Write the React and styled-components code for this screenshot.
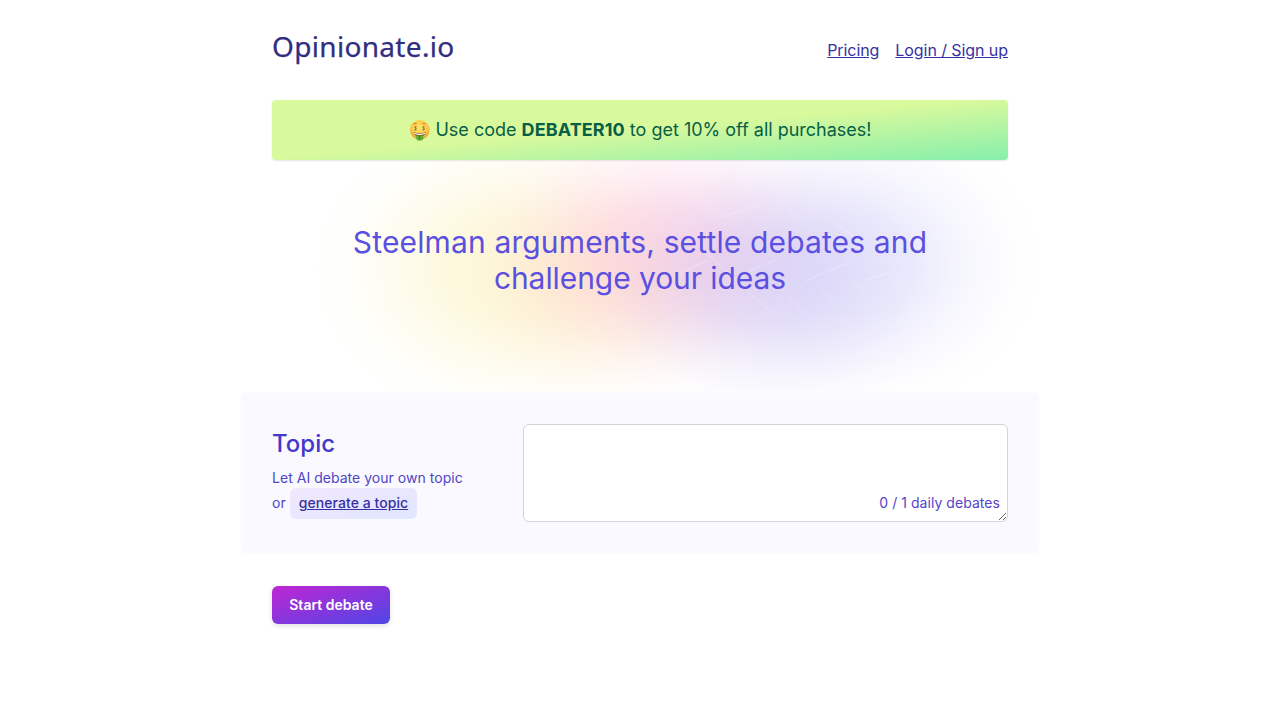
import * as React from 'react';
import styled, { createGlobalStyle } from 'styled-components';

const GlobalStyle = createGlobalStyle`
  * {
    box-sizing: border-box;
  }

  body {
    margin: 0;
    background: #fff;
    font-family: Inter, "Liberation Sans", sans-serif;
    font-size: 16px;
    line-height: 24px;
    color: #3730a3;
  }
`

const Page = styled.div`
  width: 736px;
  margin: 0 auto;
  height: 720px;
`

const Header = styled.header`
  display: flex;
  justify-content: space-between;
  height: 100px;
`

const Logo = styled.a`
  margin-top: 26px;
  font-family: "Noto Sans", sans-serif;
  font-size: 28px;
  line-height: 40px;
  letter-spacing: 0.32px;
  color: #312e81;
  -webkit-text-stroke: 0.25px #312e81;
`

const Nav = styled.nav`
  display: flex;
  gap: 16px;
  margin-top: 38px;
`

const NavLink = styled.a`
  color: #3730a3;
  letter-spacing: -0.07px;
  text-decoration: underline;
`

const Banner = styled.div`
  position: relative;
  z-index: 1;
  display: flex;
  justify-content: center;
  align-items: center;
  gap: 5px;
  height: 60px;
  padding-left: 1px;
  border-radius: 4px;
  background: linear-gradient(to bottom right, #d9f99d 0%, #d9f99d 48%, #86efac 100%);
  box-shadow: 0 1px 2px rgba(0, 0, 0, 0.1);
  color: #065f46;
  font-size: 18px;
  line-height: 28px;
  white-space: pre;

  strong {
    font-weight: 700;
    letter-spacing: 0.1px;
  }
`

const Hero = styled.section`
  position: relative;
  height: 232px;
  padding-top: 64px;
`

const Glow = styled.svg`
  position: absolute;
  left: -32px;
  top: -10px;
  width: 830px;
  height: 290px;
`

const Headline = styled.h1`
  position: relative;
  margin: 0 auto;
  color: #5b50df;
  font-size: 30px;
  font-weight: 400;
  line-height: 36px;
  text-align: center;
`

const Line = styled.span`
  display: block;
  letter-spacing: ${(props) => props.$spacing}px;
`

const Panel = styled.section`
  position: relative;
  display: grid;
  grid-template-columns: 235px 485px;
  gap: 16px;
  margin: 0 -32px;
  padding: 32px;
  height: 162px;
  border-radius: 6px;
  background: rgba(248, 248, 255, 0.88);
  box-shadow: inset 0 0 3px 1px rgba(255, 255, 255, 0.8);
`

const Intro = styled.div`
  color: #4f46c5;
  font-size: 14px;
  line-height: 20px;
`

const Title = styled.h2`
  margin: 4px 0 7px;
  color: #4338ca;
  font-size: 24px;
  font-weight: 500;
  line-height: 32px;
`

const IntroRow = styled.div`
  display: flex;
  align-items: center;
  gap: 4px;
  height: ${(props) => props.$height}px;
  letter-spacing: 0.03px;
`

const GenerateButton = styled.button`
  height: 31px;
  margin: 0;
  padding: 0 9px 1px;
  border: none;
  border-radius: 6px;
  background: linear-gradient(to bottom right, #f1e7fd, #e0e7ff);
  color: #3730a3;
  font-family: inherit;
  font-size: 14px;
  font-weight: 500;
  letter-spacing: 0.06px;
  line-height: 20px;
  text-decoration: underline;
`

const OrLabel = styled.span`
  padding-bottom: 1px;
`

const Field = styled.div`
  position: relative;
  height: 98px;
`

const TopicInput = styled.textarea`
  display: block;
  width: 100%;
  height: 98px;
  border: 1px solid #d1d5db;
  border-radius: 6px;
  background: #fff;
  outline: none;
  resize: vertical;
`

const Counter = styled.span`
  position: absolute;
  right: 8px;
  bottom: 9px;
  color: #5444c8;
  font-size: 14px;
  letter-spacing: 0.05px;
  line-height: 20px;
`

const StartButton = styled.button`
  width: 118px;
  height: 38px;
  margin-top: 32px;
  padding: 0 0 2px;
  border: none;
  border-radius: 6px;
  background: linear-gradient(to bottom right, #c026d3, #4f46e5);
  box-shadow: 0 2px 5px rgba(0, 0, 0, 0.12);
  color: #fff;
  font-family: inherit;
  font-size: 14px;
  font-weight: 600;
`

const blobs = [
  { id: 'yellow', cx: 272, cy: 120, rx: 205, ry: 160, color: '#faf0b0', opacity: 0.52 },
  { id: 'orange', cx: 376, cy: 150, rx: 160, ry: 125, color: '#ffd5b4', opacity: 0.28 },
  { id: 'pink', cx: 420, cy: 96, rx: 195, ry: 135, color: '#ffb5d5', opacity: 0.44 },
  { id: 'violet', cx: 525, cy: 130, rx: 185, ry: 145, color: '#c3b4ee', opacity: 0.45 },
  { id: 'blue', cx: 620, cy: 114, rx: 182, ry: 150, color: '#c9c8f8', opacity: 0.42 },
]

function HeroGlow() {
  return (
    <Glow viewBox="0 0 830 290" aria-hidden="true">
      <defs>
        {blobs.map((b) => (
          <radialGradient id={b.id} key={b.id}>
            <stop offset="0" stopColor={b.color} stopOpacity={b.opacity} />
            <stop offset="0.3" stopColor={b.color} stopOpacity={b.opacity * 0.82} />
            <stop offset="0.6" stopColor={b.color} stopOpacity={b.opacity * 0.36} />
            <stop offset="0.82" stopColor={b.color} stopOpacity={b.opacity * 0.09} />
            <stop offset="1" stopColor={b.color} stopOpacity="0" />
          </radialGradient>
        ))}
      </defs>
      {blobs.map((b) => (
        <ellipse key={b.id} cx={b.cx} cy={b.cy} rx={b.rx} ry={b.ry} fill={`url(#${b.id})`} />
      ))}
      {/* faint network behind the headline */}
      <g stroke="#fff" strokeOpacity="0.3" fill="none">
        <path d="M468 104 L515 148 L533 163 M503 124 L535 110 M548 145 L566 164 M583 140 L595 153 M612 132 L624 141 M440 123 L468 110 M480 68 L515 56 M550 62 L559 70 M595 72 L618 90 M565 131 L612 111 M626 130 L655 121" />
      </g>
    </Glow>
  )
}

function MoneyFace() {
  return (
    <svg width="21" height="21" viewBox="0 0 21 21" aria-hidden="true">
      <defs>
        <radialGradient id="face" cx="0.5" cy="0.4" r="0.6">
          <stop offset="0" stopColor="#ffe36a" />
          <stop offset="0.7" stopColor="#fdc742" />
          <stop offset="1" stopColor="#ee9326" />
        </radialGradient>
      </defs>
      <circle cx="10.8" cy="9.8" r="9.8" fill="url(#face)" />
      <path d="M4.6 4.1 Q6.2 2.9 7.6 3.7 M13.4 3.7 Q14.8 2.9 16.4 4.1" stroke="#a66419" strokeWidth="0.8" fill="none" />
      <ellipse cx="6.6" cy="8" rx="2.7" ry="2.8" fill="#f6dc68" />
      <ellipse cx="14.8" cy="8" rx="2.7" ry="2.8" fill="#f6dc68" />
      <g stroke="#94772a" strokeWidth="0.75" fill="none">
        <path d="M7.7 6.9 Q6.4 6 5.5 7 Q5.2 8 6.5 8.2 Q7.9 8.5 7.4 9.5 Q6.4 10.4 5.1 9.4 M6.5 5.8 V10.6" />
        <path d="M15.9 6.9 Q14.6 6 13.7 7 Q13.4 8 14.7 8.2 Q16.1 8.5 15.6 9.5 Q14.6 10.4 13.3 9.4 M14.7 5.8 V10.6" />
      </g>
      <path d="M4.5 12 Q10.5 14.7 17 12 Q15.9 16.6 10.7 16.8 Q5.5 16.6 4.5 12Z" fill="#77431d" />
      <path d="M5 12.5 Q10.5 14.9 16.5 12.5 L15.9 14 Q10.5 16 5.6 14Z" fill="#fff" />
      <path d="M7.3 14.9 Q10.7 16 14.1 14.9 L14.3 18.6 Q13.7 20.8 10.7 20.8 Q7.7 20.8 7.1 18.6Z" fill="#61ae36" />
      <path d="M10.7 16 V19.2" stroke="#33781f" strokeWidth="0.9" />
    </svg>
  )
}

export default function App() {
  return (
    <Page>
      <GlobalStyle />
      <Header>
        <Logo>Opinionate.io</Logo>
        <Nav>
          <NavLink>Pricing</NavLink>
          <NavLink>Login / Sign up</NavLink>
        </Nav>
      </Header>
      <Banner>
        <MoneyFace />
        <span>Use code <strong>DEBATER10</strong> to get 10% off all purchases!</span>
      </Banner>
      <Hero>
        <HeroGlow />
        <Headline>
          <Line $spacing={0.14}>Steelman arguments, settle debates and </Line>
          <Line $spacing={-0.07}>challenge your ideas</Line>
        </Headline>
      </Hero>
      <Panel>
        <Intro>
          <Title>Topic</Title>
          <IntroRow $height={21}>Let AI debate your own topic</IntroRow>
          <IntroRow $height={31}>
            <OrLabel>or</OrLabel>
            <GenerateButton>generate a topic</GenerateButton>
          </IntroRow>
        </Intro>
        <Field>
          <TopicInput />
          <Counter>0 / 1 daily debates</Counter>
        </Field>
      </Panel>
      <StartButton>Start debate</StartButton>
    </Page>
  );
}
